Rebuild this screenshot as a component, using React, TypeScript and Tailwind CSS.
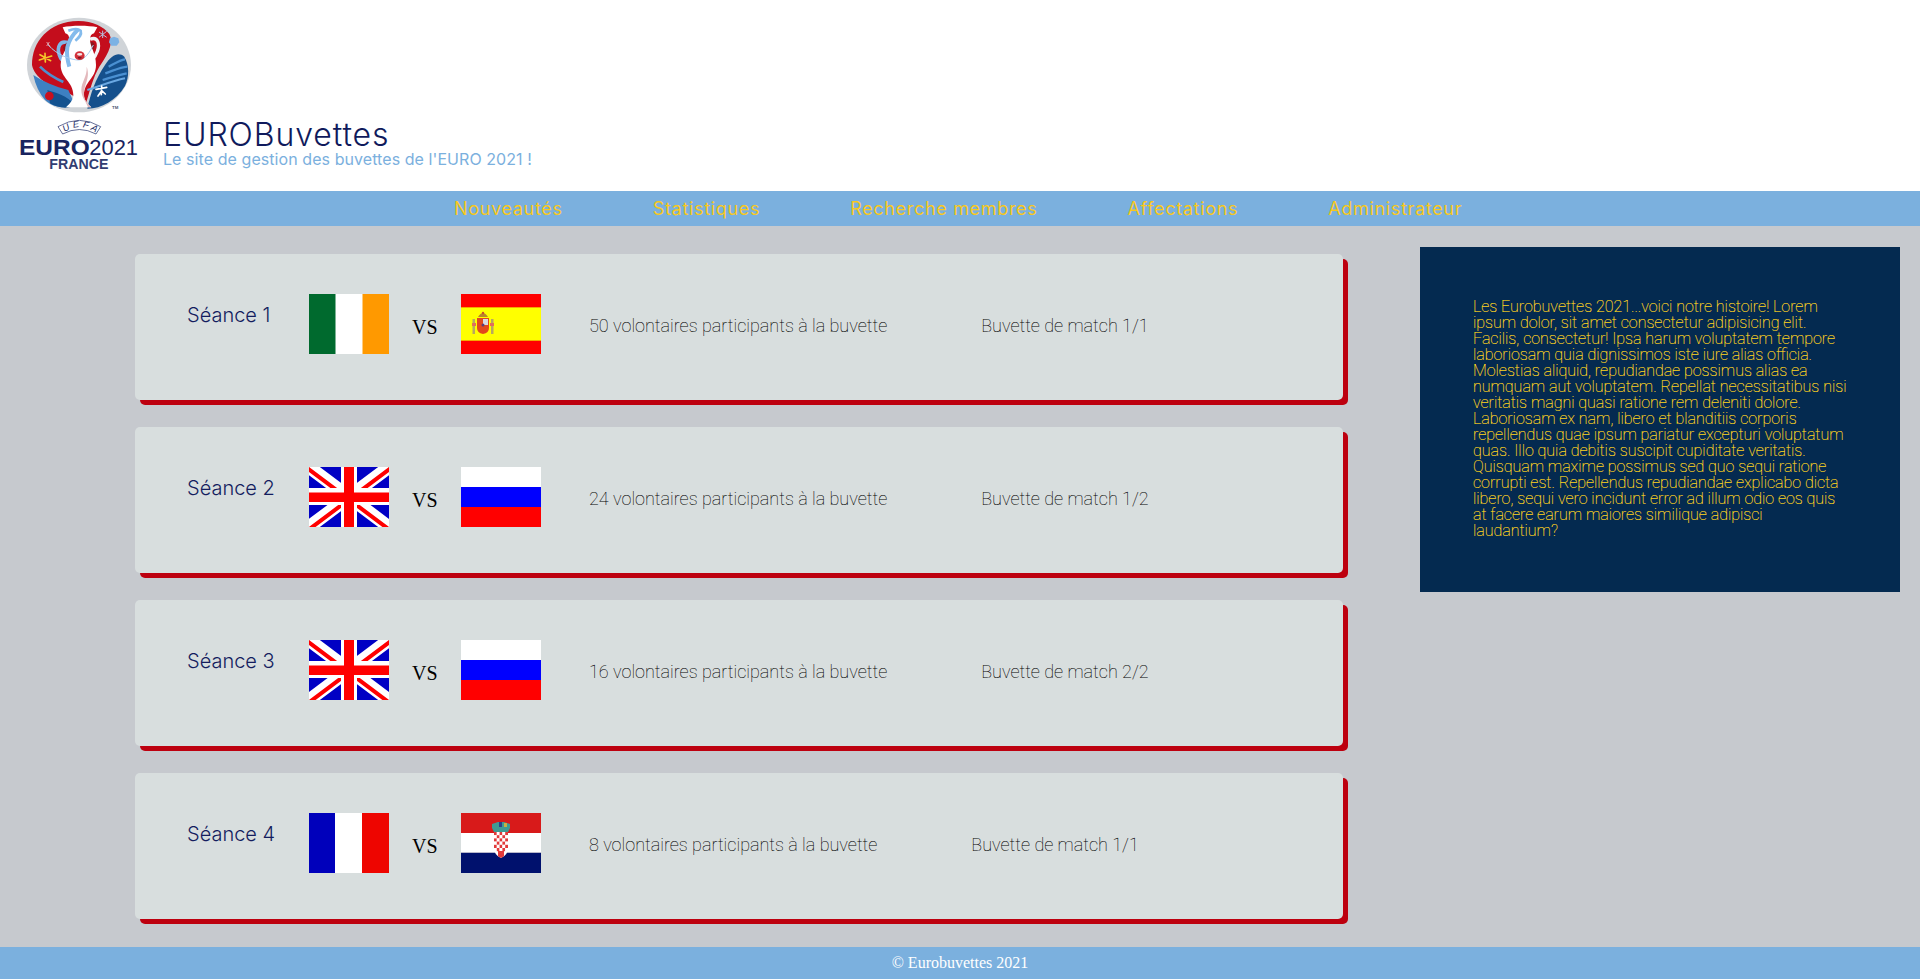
import React from "react";

const F1 = () => (
  <svg width="80" height="60" viewBox="0 0 80 60" className="block shrink-0">
    <rect width="80" height="60" fill="#fff" />
    <rect width="26.5" height="60" fill="#006a2e" />
    <rect x="53.5" width="26.5" height="60" fill="#ff9900" />
  </svg>
);
const Fr = () => (
  <svg width="80" height="60" viewBox="0 0 80 60" className="block shrink-0">
    <rect width="80" height="60" fill="#fff" />
    <rect width="26" height="60" fill="#0000bb" />
    <rect x="53" width="27" height="60" fill="#ee0500" />
  </svg>
);
const Ru = () => (
  <svg width="80" height="60" viewBox="0 0 80 60" className="block shrink-0">
    <rect width="80" height="20" fill="#fff" />
    <rect y="20" width="80" height="20" fill="#0000ff" />
    <rect y="40" width="80" height="20" fill="#ff0000" />
  </svg>
);
const Uk = () => (
  <svg width="80" height="60" viewBox="0 0 80 60" className="block shrink-0">
    <rect width="80" height="60" fill="#0000c4" />
    <path d="M0 0L80 60M80 0L0 60" stroke="#fff" strokeWidth="13" />
    <path d="M0 0L40 30M80 60L40 30" stroke="#ff0000" strokeWidth="4" transform="translate(-1.4 1.4)" />
    <path d="M80 0L40 30M0 60L40 30" stroke="#ff0000" strokeWidth="4" transform="translate(1.4 1.4)" />
    <rect x="32" width="16" height="60" fill="#fff" />
    <rect y="21" width="80" height="17" fill="#fff" />
    <rect x="35" width="10" height="60" fill="#ff0000" />
    <rect y="25.500" width="80" height="9.500" fill="#ff0000" />
  </svg>
);
const Es = () => (
  <svg width="80" height="60" viewBox="0 0 80 60" className="block shrink-0">
    <rect width="80" height="60" fill="#ff0000" />
    <rect y="13" width="80" height="34" fill="#f5a800" />
    <rect y="14" width="80" height="32" fill="#ffff00" />
    <rect x="11.500" y="25" width="2.500" height="15" fill="#b8a860" />
    <rect x="30" y="25" width="2.500" height="15" fill="#b8a860" />
    <rect x="11" y="29" width="4" height="3" fill="#e0705a" />
    <rect x="29" y="29" width="4" height="3" fill="#e0705a" />
    <path d="M17 23Q22 15 27 23Z" fill="#b8862a" />
    <circle cx="22" cy="19" r="1.200" fill="#c8502a" />
    <path d="M16 24H28V34Q28 39 22 40Q16 39 16 34Z" fill="#e2481c" />
    <rect x="22" y="25" width="5" height="6" fill="#d8d8e0" />
    <circle cx="22" cy="31" r="1.500" fill="#5a3a78" />
  </svg>
);
const Hr = () => {
  const cells: React.ReactNode[] = [];
  for (let r = 0; r < 6; r++)
    for (let c = 0; c < 5; c++)
      cells.push(
        <rect key={`${r}-${c}`} x={33 + c * 2.8} y={19 + r * 3.2} width="2.8" height="3.2" fill={(r + c) % 2 === 0 ? "#e23a3a" : "#fff"} />
      );
  return (
    <svg width="80" height="60" viewBox="0 0 80 60" className="block shrink-0">
      <rect width="80" height="20" fill="#d81a1a" />
      <rect y="20" width="80" height="20" fill="#fff" />
      <rect y="40" width="80" height="20" fill="#00116d" />
      <rect y="39" width="80" height="1" fill="#b8b8cc" />
      <path d="M31 15L31 11L34 10L37 9L40 9L43 9L46 10L49 11L49 15L47 19H33Z" fill="#3f9a92" />
      <path d="M38 9h3v5h-3z" fill="#2c3f8c" />
      <path d="M43 10h3v4h-3z" fill="#c8b040" />
      <path d="M33 19H47V35Q47 42 40 45Q33 42 33 35Z" fill="#fff" />
      <clipPath id="hrc"><path d="M33 19H47V35Q47 42 40 45Q33 42 33 35Z" /></clipPath>
      <g clipPath="url(#hrc)">{cells}
        <rect x="37" y="38" width="6" height="7" fill="#e23a3a" />
      </g>
    </svg>
  );
};

const Logo = () => (
  <svg width="140" height="170" viewBox="0 0 420 510" className="block shrink-0">
    <ellipse cx="207" cy="165" rx="156" ry="142" fill="#d0d4d8" />
    <path d="M66 165C66 95 115 35 205 33C250 33 280 50 298 72C310 95 300 125 268 170C250 200 240 240 228 280C190 258 165 240 150 240C120 232 72 200 66 165Z" fill="#c40d1c" />
    <path d="M70 195C100 215 135 230 175 240L195 285C165 298 130 292 105 270C88 250 76 225 70 195Z" fill="#3d80c2" />
    <path d="M112 240C140 250 170 255 195 285C175 298 145 295 120 280Z" fill="#13528f" />
    <path d="M232 296C242 250 255 210 285 165C305 135 325 125 343 140C358 165 358 200 345 228C318 272 275 296 232 296Z" fill="#15508c" />
    <path d="M296 170C315 160 330 150 345 148M286 190C310 182 330 172 352 170M278 210C305 202 330 194 350 190" stroke="#4a90d2" strokeWidth="7" fill="none" />
    <path d="M232 240C270 228 310 212 345 205" stroke="#6aa8e2" strokeWidth="6" fill="none" />
    <path d="M90 170C110 190 135 205 160 216" stroke="#4d8fd0" strokeWidth="8" fill="none" />
    <path d="M176 100C150 88 140 112 148 135C152 148 160 156 172 162" stroke="#7fb6e8" strokeWidth="11" fill="none" />
    <path d="M240 88C264 78 270 102 262 124C258 136 252 144 246 150" stroke="#f0f2f5" strokeWidth="10" fill="none" />
    <path d="M160 112C166 94 178 94 180 104L176 134C168 134 160 126 160 112Z" fill="#8a1620" />
    <path d="M234 104C238 92 252 92 254 106L248 128C240 126 234 116 234 104Z" fill="#8a1620" />
    <path d="M158 52C185 46 235 46 262 52L252 70C244 72 240 78 240 90C240 110 258 130 258 165C258 205 222 215 222 255C222 270 232 280 244 292H168C180 280 190 270 190 255C190 215 152 205 152 165C152 130 178 110 178 90C178 78 174 72 166 70Z" fill="#ffffff" />
    <path d="M230 170C242 205 222 218 222 255C222 270 232 280 244 292H234C226 270 214 262 214 240C214 215 232 200 230 170Z" fill="#e3b8bc" />
    <path d="M205 58C190 72 178 86 172 112C170 126 172 150 178 170" stroke="#84bbec" strokeWidth="12" fill="none" />
    <path d="M175 62C190 56 205 56 212 62C216 74 208 82 196 92" stroke="#84bbec" strokeWidth="8" fill="none" />
    <path d="M115 105C140 135 185 150 205 150C225 150 240 125 250 105" stroke="#a8cef0" strokeWidth="3" fill="none" />
    <ellipse cx="209" cy="137" rx="15" ry="13" fill="#d3313a" />
    <ellipse cx="209" cy="133" rx="8" ry="4" fill="#f6e4e6" />
    <ellipse cx="209" cy="143" rx="6" ry="3" fill="#7c1622" />
    <path d="M118 96L110 108M110 96L120 110" stroke="#e8e8f0" strokeWidth="2" />
    <g stroke="#f4c62a" strokeWidth="5" strokeLinecap="round">
      <path d="M105 130L106 156M90 134L122 152M88 150L125 138" />
    </g>
    <g stroke="#b6c4e0" strokeWidth="3"><path d="M278 62L278 84M267 66L290 82M290 64L267 82" /></g>
    <path d="M300 85L312 80L325 85L328 97L320 107H304L297 97Z" fill="#7cb2e4" />
    <g stroke="#ffffff" strokeWidth="5" strokeLinecap="round">
      <path d="M275 228L274 254M258 238L290 232M275 242L264 258M275 242L286 252" />
    </g>
    <circle cx="118" cy="258" r="13" fill="#c8101e" />
    <text x="306" y="298" fontFamily="'Liberation Sans', sans-serif" fontSize="13" fontWeight="700" fill="#4a5570">TM</text>
    <path d="M144 350Q208 312 272 350L258 372Q208 345 158 372Z" fill="none" stroke="#1d2a66" strokeWidth="2" />
    <path id="uefaArc" d="M160 369Q208 334 258 369" fill="none" />
    <text fontFamily="'Liberation Sans', sans-serif" fontSize="28" fill="#1d2a66" fontStyle="italic">
      <textPath href="#uefaArc" startOffset="4%" textLength="100">UEFA</textPath>
    </text>
    <text x="27" y="435" fontFamily="'Liberation Sans', sans-serif" fontSize="68" fontWeight="700" fill="#19245f" textLength="212" lengthAdjust="spacingAndGlyphs">EURO</text>
    <text x="238" y="435" fontFamily="'Liberation Sans', sans-serif" fontSize="68" fill="#19245f" textLength="146" lengthAdjust="spacingAndGlyphs">2021</text>
    <text x="118" y="478" fontFamily="'Liberation Sans', sans-serif" fontSize="43" fontWeight="700" fill="#323d72" textLength="177" lengthAdjust="spacingAndGlyphs">FRANCE</text>
  </svg>
);

const navItems = ["Nouveautés", "Statistiques", "Recherche membres", "Affectations", "Administrateur"];

const seances = [
  { n: 1, a: <F1 />, b: <Es />, v: "50 volontaires participants à la buvette", m: "Buvette de match 1/1" },
  { n: 2, a: <Uk />, b: <Ru />, v: "24 volontaires participants à la buvette", m: "Buvette de match 1/2" },
  { n: 3, a: <Uk />, b: <Ru />, v: "16 volontaires participants à la buvette", m: "Buvette de match 2/2" },
  { n: 4, a: <Fr />, b: <Hr />, v: "8 volontaires participants à la buvette", m: "Buvette de match 1/1" },
];

const story =
  "Les Eurobuvettes 2021...voici notre histoire! Lorem ipsum dolor, sit amet consectetur adipisicing elit. Facilis, consectetur! Ipsa harum voluptatem tempore laboriosam quia dignissimos iste iure alias officia. Molestias aliquid, repudiandae possimus alias ea numquam aut voluptatem. Repellat necessitatibus nisi veritatis magni quasi ratione rem deleniti dolore. Laboriosam ex nam, libero et blanditiis corporis repellendus quae ipsum pariatur excepturi voluptatum quas. Illo quia debitis suscipit cupiditate veritatis. Quisquam maxime possimus sed quo sequi ratione corrupti est. Repellendus repudiandae explicabo dicta libero, sequi vero incidunt error ad illum odio eos quis at facere earum maiores similique adipisci laudantium?";

export default function App() {
  return (
    <div className="flex min-h-[979px] flex-col bg-[#c6c9ce]">
      <header className="flex h-[191px] items-start bg-white pl-[10px] pt-[10px]">
        <Logo />
        <div className="ml-[13px] mt-[110px] font-['Inter',sans-serif]">
          <h1 className="text-[32px] font-light leading-[30px] tracking-[0.9px] text-[#101a5c]">EUROBuvettes</h1>
          <p className="text-[16px] leading-[18px] tracking-[0.07px] text-[#7bb0de]">Le site de gestion des buvettes de l'EURO 2021 !</p>
        </div>
      </header>
      <nav className="flex h-[35px] items-center bg-[#7bb0de] pl-[454px] font-['Inter',sans-serif] text-[18px] tracking-[0.68px] text-[#f7c81e]">
        {navItems.map((t) => (
          <span key={t} className="mr-[90px]">{t}</span>
        ))}
      </nav>
      <main className="flex flex-1 items-start pl-[135px] pt-[21px]">
        <div className="mt-[7px] flex w-[1208px] flex-col gap-[27px]">
          {seances.map((s) => (
            <section key={s.n} className="flex h-[146px] items-start rounded-[5px] bg-[#d8dede] pt-[40px] shadow-[5px_5px_0_#bd000f]">
              <h2 className="ml-[52px] mt-[6px] w-[122px] font-['Inter',sans-serif] text-[20px] font-light leading-[30px] text-[#141d5e]">Séance {s.n}</h2>
              {s.a}
              <span className="ml-[23px] mr-[24px] mt-[21px] w-[25px] font-['Liberation_Serif',serif] text-[20px] leading-[24px] text-black">VS</span>
              {s.b}
              <p className="ml-[48px] mr-[94px] mt-[20px] font-['Roboto',sans-serif] text-[18px] font-thin leading-[24px] text-black [-webkit-text-stroke:0.06px_#000]">{s.v}</p>
              <p className="mt-[20px] font-['Roboto',sans-serif] text-[18px] font-thin leading-[24px] text-black [-webkit-text-stroke:0.06px_#000]">{s.m}</p>
            </section>
          ))}
        </div>
        <aside className="ml-[77px] h-[345px] w-[480px] bg-[#042a50] pb-[53px] pl-[53px] pr-[50px] pt-[52px] font-['Roboto',sans-serif] text-[16px] font-thin leading-[16px] text-[#ffd61e] [-webkit-text-stroke:0.2px_#ffd61e]">
          {story}
        </aside>
      </main>
      <footer className="flex h-[32px] items-center justify-center bg-[#7bb0de] font-['Liberation_Serif',serif] text-[16px] text-white">
        © Eurobuvettes 2021
      </footer>
    </div>
  );
}
